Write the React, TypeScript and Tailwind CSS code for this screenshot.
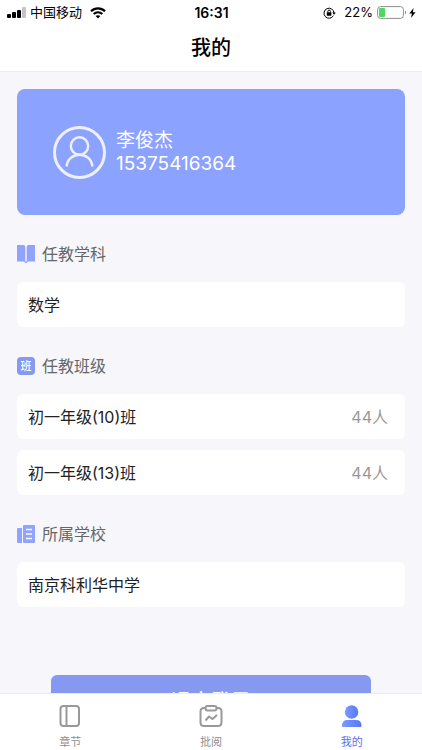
import React from 'react';

interface SectionProps {
  icon: React.ReactNode;
  title: string;
  children: React.ReactNode;
}

interface TabProps {
  icon: React.ReactNode;
  label: string;
  active?: boolean;
}

const classes = [
  { name: '初一年级(10)班', count: 44 },
  { name: '初一年级(13)班', count: 44 },
];

const StatusBar = () => (
  <div className="grid grid-cols-3 items-center h-[25px] pl-[7px] pr-[6px] text-[13px] text-black">
    <div className="flex items-center">
      <svg width="19" height="12" viewBox="0 0 19 12" fill="#000">
        <rect x="0" y="7" width="4" height="4" rx="1" />
        <rect x="5" y="5" width="4" height="6" rx="1" />
        <rect x="10" y="3" width="4" height="8" rx="1" />
        <rect x="15" y="0" width="4" height="11" rx="1" fill="#c4c4c4" />
      </svg>
      <span className="ml-1">中国移动</span>
      <svg className="ml-2" width="16" height="12" viewBox="0 0 16 12" fill="none" stroke="#000" strokeWidth="2.2">
        <path d="M1 4.3C5 .4 11 .4 15 4.3" />
        <path d="M3.7 7C6.2 4.7 9.8 4.7 12.3 7" />
        <path d="M8 11.6 5.6 9.1C7 7.9 9 7.9 10.4 9.1Z" fill="#000" stroke="none" />
      </svg>
    </div>
    <span className="text-center text-[14px] font-semibold">16:31</span>
    <div className="flex items-center justify-end">
      <svg width="13" height="12" viewBox="0 0 13 12" fill="none" stroke="#000" strokeWidth="1">
        <path d="M10.4 8.6A5 5 0 1 1 11 6" />
        <path d="M9.2 5.4h3.6L11 7.8Z" fill="#000" stroke="none" />
        <rect x="3.8" y="5.3" width="4.6" height="3.4" rx=".4" fill="#000" stroke="none" />
        <path d="M4.8 5.5V4.4a1.3 1.3 0 0 1 2.6 0v1.1" />
      </svg>
      <span className="ml-2">22%</span>
      <svg className="ml-1" width="30" height="13" viewBox="0 0 30 13">
        <rect x=".6" y=".6" width="25.8" height="11.8" rx="3" fill="#fff" stroke="#8e8e8e" />
        <rect x="2" y="2" width="6" height="9" rx="1" fill="#4cd964" />
        <path d="M28 4.5c1.6.6 1.6 3.4 0 4Z" fill="#8e8e8e" />
      </svg>
      <svg className="ml-0.5" width="7" height="10" viewBox="0 0 7 10" fill="#000">
        <path d="M4.6 0 .3 5.6h2.6L2 10l4.6-5.8H3.9Z" />
      </svg>
    </div>
  </div>
);

const BookIcon = () => (
  <svg width="18" height="18" viewBox="0 0 18 18" fill="#8fa3ff">
    <path d="M0 0h6.4Q8.3.2 8.3 2v15.2Q7.8 16.4 6.4 16.4H0Z" />
    <path d="M18 0h-6.4Q9.7.2 9.7 2v15.2q.5-.8 1.9-.8H18Z" />
    <path d="M7 16.4h4L9.6 18H8.4Z" />
  </svg>
);

const ClassIcon = () => (
  <span className="flex items-center justify-center w-[18px] h-[18px] rounded-sm bg-[#8699f2] text-white text-[11px] leading-none font-medium">
    班
  </span>
);

const SchoolIcon = () => (
  <svg width="18" height="18" viewBox="0 0 18 18">
    <path d="M1 3h4v15H1q-1 0-1-1V4q0-1 1-1Z" fill="#8fa3ff" />
    <rect x="6" y="0" width="12" height="18" rx="1" fill="#8fa3ff" />
    <path d="M9 4.5h6M9 9h6M9 13.5h6" stroke="#fff" strokeWidth="1.4" />
  </svg>
);

const Section: React.FC<SectionProps> = ({ icon, title, children }) => (
  <section className="mt-6">
    <h2 className="flex items-center gap-[7px] h-[30px] mb-[13px] text-[16px] text-[#666]">
      {icon}
      {title}
    </h2>
    <div className="flex flex-col gap-[11px]">{children}</div>
  </section>
);

const Row: React.FC<{ label: string; extra?: string }> = ({ label, extra }) => (
  <div className="flex items-center justify-between h-[45px] pl-[11px] pr-[17px] rounded-md bg-white text-[16px]">
    <span className="text-[#222]">{label}</span>
    {extra && <span className="text-[#999]">{extra}</span>}
  </div>
);

const Tab: React.FC<TabProps> = ({ icon, label, active }) => (
  <a
    href="#"
    aria-current={active ? 'page' : undefined}
    className={`flex flex-1 flex-col items-center pt-[10px] text-[11px] leading-4 ${active ? 'text-[#5b6ff0]' : 'text-[#8e8e8e]'}`}
  >
    {icon}
    <span className="mt-[6px]">{label}</span>
  </a>
);

export default function App() {
  return (
    <div className="flex flex-col h-screen bg-[#f6f6fb] font-[Inter,'Noto_Sans_CJK_SC',sans-serif]">
      <header className="shrink-0 bg-white border-b border-[#ebebee]">
        <StatusBar />
        <h1 className="text-center text-[20px] leading-[46px] font-medium text-black">我的</h1>
      </header>

      <main className="flex-1 min-h-0 overflow-y-auto [scrollbar-width:none] px-[17px] pt-[17px]">
        <div className="flex items-center gap-[10px] h-[126px] pl-9 rounded-lg bg-[#8ca2ff] text-white text-[19px] leading-[23px]">
          <svg width="53" height="53" viewBox="0 0 53 53" fill="none" stroke="#edf0ff">
            <circle cx="26.5" cy="26.5" r="25" strokeWidth="3" />
            <circle cx="26.5" cy="20" r="8.7" strokeWidth="2.4" />
            <path d="M13.7 40.5c.8-15.6 24.8-15.6 25.6 0" strokeWidth="2.4" />
          </svg>
          <div>
            <p>李俊杰</p>
            <p>15375416364</p>
          </div>
        </div>

        <Section icon={<BookIcon />} title="任教学科">
          <Row label="数学" />
        </Section>
        <Section icon={<ClassIcon />} title="任教班级">
          {classes.map((c) => (
            <Row key={c.name} label={c.name} extra={`${c.count}人`} />
          ))}
        </Section>
        <Section icon={<SchoolIcon />} title="所属学校">
          <Row label="南京科利华中学" />
        </Section>

        <div className="px-[34px] pt-[68px] pb-6">
          <button className="w-full h-[54px] rounded-md bg-[#8699f0] text-white text-[20px] font-medium">退出登录</button>
        </div>
      </main>

      <nav className="flex shrink-0 h-[57px] bg-white border-t border-[#ececf0]">
        <Tab
          label="章节"
          icon={
            <svg width="24" height="24" viewBox="0 0 24 24" fill="none" stroke="#999" strokeWidth="2">
              <rect x="2.5" y="2" width="18.5" height="20" rx="3" />
              <path d="M8.5 2v20" />
            </svg>
          }
        />
        <Tab
          label="批阅"
          icon={
            <svg width="24" height="24" viewBox="0 0 24 24" fill="none" stroke="#999" strokeWidth="2">
              <path d="M6.5 4H5Q1.5 4 1.5 7.5v11Q1.5 22 5 22h14q3.5 0 3.5-3.5v-11Q22.5 4 19 4h-1.5" />
              <rect x="6.5" y="2" width="11" height="4.5" rx="2" />
              <path d="m6.5 16.5 3.5-4 3.5 2.5 4.5-4" strokeLinejoin="round" />
            </svg>
          }
        />
        <Tab
          active
          label="我的"
          icon={
            <svg width="24" height="24" viewBox="0 0 24 24" fill="url(#user)">
              <defs>
                <linearGradient id="user" x1="0" x2="1">
                  <stop stopColor="#7a9bff" />
                  <stop offset="1" stopColor="#5877f5" />
                </linearGradient>
              </defs>
              <circle cx="11.6" cy="8" r="6.7" />
              <path d="M2 21.5q0-5.500 5.5-5.5H16q5.500 0 5.500 5.500 0 1.500-1 1.500H3q-1 0-1-1.500Z" />
            </svg>
          }
        />
      </nav>
    </div>
  );
}
